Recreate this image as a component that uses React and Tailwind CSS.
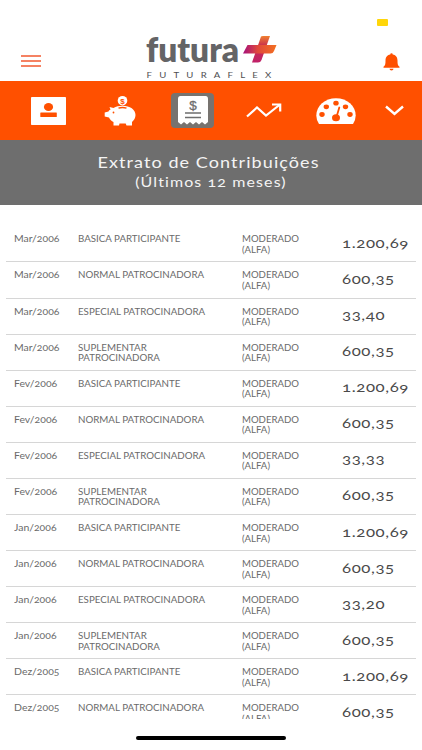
const rows = [
  ['Mar/2006', 'BASICA PARTICIPANTE', '1.200,69'],
  ['Mar/2006', 'NORMAL PATROCINADORA', '600,35'],
  ['Mar/2006', 'ESPECIAL PATROCINADORA', '33,40'],
  ['Mar/2006', 'SUPLEMENTAR PATROCINADORA', '600,35'],
  ['Fev/2006', 'BASICA PARTICIPANTE', '1.200,69'],
  ['Fev/2006', 'NORMAL PATROCINADORA', '600,35'],
  ['Fev/2006', 'ESPECIAL PATROCINADORA', '33,33'],
  ['Fev/2006', 'SUPLEMENTAR PATROCINADORA', '600,35'],
  ['Jan/2006', 'BASICA PARTICIPANTE', '1.200,69'],
  ['Jan/2006', 'NORMAL PATROCINADORA', '600,35'],
  ['Jan/2006', 'ESPECIAL PATROCINADORA', '33,20'],
  ['Jan/2006', 'SUPLEMENTAR PATROCINADORA', '600,35'],
  ['Dez/2005', 'BASICA PARTICIPANTE', '1.200,69'],
  ['Dez/2005', 'NORMAL PATROCINADORA', '600,35'],
]

function Logo() {
  return (
    <svg width="134" height="46" viewBox="0 0 134 46" className="block overflow-visible">
      <defs>
        <linearGradient id="plusH" gradientUnits="userSpaceOnUse" x1="98" y1="0" x2="131" y2="0">
          <stop offset="0" stopColor="#a5107c" />
          <stop offset="0.45" stopColor="#e0483c" />
          <stop offset="1" stopColor="#f36f20" />
        </linearGradient>
        <linearGradient id="plusV" gradientUnits="userSpaceOnUse" x1="0" y1="1" x2="0" y2="28">
          <stop offset="0" stopColor="#f08030" />
          <stop offset="0.35" stopColor="#c92f4c" />
          <stop offset="1" stopColor="#c0206a" />
        </linearGradient>
      </defs>
      <text x="1" y="27" textLength="93" lengthAdjust="spacingAndGlyphs" fontSize="34" fontWeight="800" fill="#646466" fontFamily="Lato, sans-serif">futura</text>
      <path d="M116 1.500Q116.500 1 118 1H125L116.500 25Q115.500 27.500 113 27.500H107Z" fill="url(#plusV)" />
      <path d="M102.500 10H131.500L129 16Q128 18.500 125.500 18.500H98Z" fill="url(#plusH)" />
      <g transform="scale(1.2 1)">
        <text x="1.300" y="42.800" textLength="104" fontSize="8" fill="#505052" fontFamily="Lato, sans-serif">FUTURAFLEX</text>
      </g>
    </svg>
  )
}

function BellIcon() {
  return (
    <svg width="17" height="18" viewBox="0 0 17 18" fill="#ff5000">
      <path d="M8.500 0.300a1.200 1.200 0 0 1 1.200 1.300C13.300 2.300 14.500 4.800 14.500 7.500c0 3.500.2 4.800 2 6.300v1H.5v-1C2.300 12.300 2.500 11 2.500 7.500 2.500 4.800 3.700 2.300 7.300 1.600A1.200 1.200 0 0 1 8.500.3z" />
      <path d="M6.500 15.800h4a2 1.700 0 0 1-4 0z" />
    </svg>
  )
}

function CardIcon() {
  return (
    <svg width="35" height="28" viewBox="0 0 35 28">
      <rect width="35" height="28" rx="0.800" fill="#fff" />
      <ellipse cx="17.500" cy="10" rx="4.600" ry="4" fill="#ff5000" />
      <rect x="9.300" y="15.500" width="16.500" height="4.500" rx="0.500" fill="#ff5000" />
    </svg>
  )
}

function PigIcon() {
  return (
    <svg width="32" height="30" viewBox="0 0 32 30" className="overflow-visible">
      <circle cx="18.500" cy="4.700" r="4.800" fill="#fff" />
      <text x="18.500" y="7.600" textAnchor="middle" fontSize="8" fontWeight="700" fill="#ff5000" fontFamily="Liberation Sans, sans-serif">$</text>
      <path d="M5.500 11L9.500 12C12 10.500 15 9.700 18.500 9.700C26 9.700 31.500 13.500 31.500 19C31.500 22 30 24.300 28 26V29.500H22.500L21.700 27.500H15.500L15 29.500H9.500V26C7.500 25 6 23.500 5 21.500L0.700 20.500V16.500L4.500 15.500C5 14.500 5.500 14 6.500 13.500Z" fill="#fff" />
      <path d="M14.500 12.200Q18.500 10.900 22.500 12.200" stroke="#ff5000" strokeWidth="1.400" fill="none" />
      <circle cx="9.500" cy="16.500" r="0.900" fill="#ff5000" />
    </svg>
  )
}

function ReceiptIcon() {
  return (
    <svg width="30" height="29" viewBox="0 0 30 29">
      <path d="M2.500 0H27.500Q30 0 30 3V26L27 28.500L24 26L21 28.500L18 26L15 28.500L12 26L9 28.500L6 26L3 28.500L0 26V3Q0 0 2.500 0Z" fill="#fff" />
      <text x="15" y="13.700" textAnchor="middle" fontSize="13.500" fill="#6e6e6e" stroke="#6e6e6e" strokeWidth="0.300" fontFamily="Liberation Sans, sans-serif">$</text>
      <path d="M7 17H23M7 21.500H23" stroke="#6e6e6e" strokeWidth="1.300" />
    </svg>
  )
}

function TrendIcon() {
  return (
    <svg width="36" height="16" viewBox="0 0 36 16" fill="none" stroke="#fff" strokeWidth="2.200">
      <path d="M1 13.500L11 4.500L20 12.500L34 1.500" />
      <path d="M26 1.500H34.200V8.500" />
    </svg>
  )
}

function GaugeIcon() {
  return (
    <svg width="40" height="26" viewBox="0 0 40 26">
      <path d="M3 26Q0.300 22 0.300 17.500C0.300 8 9 0.300 20 0.300S39.700 8 39.700 17.500Q39.700 22 37 26Z" fill="#fff" />
      <g fill="#ff5000">
        <ellipse cx="6" cy="16.500" rx="2.700" ry="2.400" />
        <ellipse cx="10.300" cy="8.800" rx="2.700" ry="2.400" />
        <ellipse cx="20" cy="5.200" rx="2.700" ry="2.400" />
        <ellipse cx="29.500" cy="8.800" rx="2.700" ry="2.400" />
        <ellipse cx="34" cy="16.500" rx="2.700" ry="2.400" />
        <ellipse cx="20" cy="19.800" rx="4" ry="3.500" />
      </g>
      <path d="M20.500 19L23.300 9.500" stroke="#ff5000" strokeWidth="1.800" strokeLinecap="round" />
    </svg>
  )
}

export default function App() {
  return (
    <div className="w-[422px] h-[750px] overflow-hidden bg-white flex flex-col font-[Lato,sans-serif] oldstyle-nums">
      <header className="relative h-[81px] shrink-0 flex pl-[21px] pr-[22px]">
        <svg width="20" height="14" viewBox="0 0 20 14" className="mt-[54px]">
          <path d="M0 2H20M0 7H20M0 12H20" stroke="#f25a30" strokeWidth="1.500" />
        </svg>
        <div className="mt-[35px] ml-[104px]"><Logo /></div>
        <div className="mt-[53px] ml-auto"><BellIcon /></div>
        <span className="absolute left-[377px] top-[19px] w-[11px] h-[7px] rounded-[1px] bg-[#ffd60a]" />
      </header>

      <nav className="h-[59px] shrink-0 bg-[#ff5000] flex items-center pl-[31px]">
        <CardIcon />
        <div className="ml-[38px]"><PigIcon /></div>
        <div className="ml-[35px] w-[43px] h-[35px] rounded-[4px] bg-[#77736f] flex items-center justify-center">
          <ReceiptIcon />
        </div>
        <div className="ml-[32px]"><TrendIcon /></div>
        <div className="ml-[34px]"><GaugeIcon /></div>
        <svg width="19" height="11" viewBox="0 0 19 11" className="ml-[29px]" fill="none" stroke="#fff" strokeWidth="2.400">
          <path d="M1 1.500L9.500 9L18 1.500" />
        </svg>
      </nav>

      <div className="h-[65px] shrink-0 bg-[#6e6e6e] text-[#f4f4f4] flex flex-col items-center pt-[12px] pr-[4px]">
        <h1 className="text-[15px] leading-[20px] tracking-[0.9px] scale-x-[1.2] whitespace-nowrap">Extrato de Contribuições</h1>
        <h2 className="text-[13px] leading-[20px] tracking-[0.9px] scale-x-[1.23] whitespace-nowrap pl-[3px]">(Últimos 12 meses)</h2>
      </div>

      <main className="mt-[21.400px] h-[492.600px] shrink-0 overflow-hidden px-[6px] text-[#6a6a6a]">
        {rows.map(([date, kind, value], i) => (
          <div key={i} className="h-[36.080px] border-b border-[#d6d6d6] flex text-[8.500px] leading-[10.500px]">
            <div className="w-[72px] shrink-0 pl-[8px] pt-[8px]">
              <span className="block origin-left scale-x-[1.23] whitespace-nowrap w-[40px]">{date}</span>
            </div>
            <div className="w-[163.500px] shrink-0 pt-[8px]">
              <span className="block w-[115px] origin-left scale-x-[1.145]">{kind}</span>
            </div>
            <div className="w-[100px] shrink-0 pt-[8px]">
              <span className="block w-[50px] origin-left scale-x-[1.13]">MODERADO (ALFA)</span>
            </div>
            <div className="pt-[7.500px] text-[14px] leading-[18px] text-[#4a4a4a]">
              <span className="block origin-left scale-x-[1.2] tracking-[0.500px]">{value}</span>
            </div>
          </div>
        ))}
      </main>

      <div className="flex justify-center pt-[17px] h-[30px]">
        <div className="w-[150px] h-[4px] rounded-full bg-black" />
      </div>
    </div>
  )
}
